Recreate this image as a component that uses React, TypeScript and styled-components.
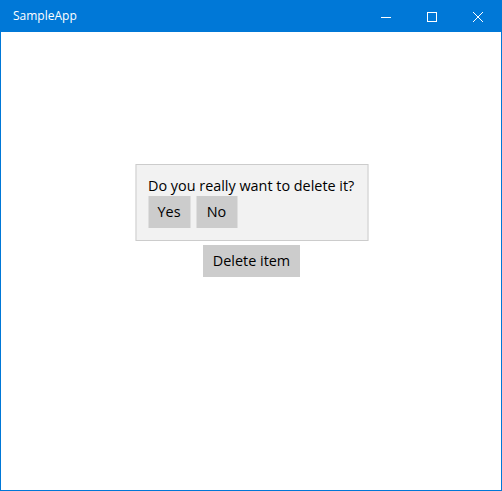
import React from 'react';
import styled, { createGlobalStyle } from 'styled-components';

const GlobalStyle = createGlobalStyle`
  html, body {
    margin: 0;
    padding: 0;
    background: #ffffff;
  }
  * {
    box-sizing: border-box;
  }
`;

const App = () => {
  return (
    <>
      <GlobalStyle />
      <StWindow>
        <StTitleBar>
          <StTitle>SampleApp</StTitle>
          <StCaptionButtons>
            <StCaptionButton aria-label="Minimize">
              <svg width="10" height="10" viewBox="0 0 10 10">
                <path d="M0 5.5h10" stroke="#fff" strokeWidth="1" />
              </svg>
            </StCaptionButton>
            <StCaptionButton aria-label="Maximize">
              <svg width="10" height="10" viewBox="0 0 10 10">
                <rect x="0.5" y="0.5" width="9" height="9" fill="none" stroke="#fff" strokeWidth="1" />
              </svg>
            </StCaptionButton>
            <StCaptionButton aria-label="Close">
              <svg width="10" height="10" viewBox="0 0 10 10">
                <path d="M0 0L10 10M10 0L0 10" stroke="#fff" strokeWidth="1" />
              </svg>
            </StCaptionButton>
          </StCaptionButtons>
        </StTitleBar>
        <StContent>
          <StAnchor>
            <StFlyout>
              <StQuestion>Do you really want to delete it?</StQuestion>
              <StButtonRow>
                <StButton $width={42}>Yes</StButton>
                <StButton $width={41}>No</StButton>
              </StButtonRow>
            </StFlyout>
            <StButton $width={97}>Delete item</StButton>
          </StAnchor>
        </StContent>
      </StWindow>
    </>
  );
};

export default App;

const StWindow = styled.div`
  display: flex;
  flex-direction: column;
  width: 502px;
  height: 491px;
  border: 1px solid #0078d7;
  background: #ffffff;
  font-family: 'Open Sans', 'Noto Sans', sans-serif;
`;

const StTitleBar = styled.div`
  display: flex;
  align-items: center;
  justify-content: space-between;
  height: 31px;
  flex-shrink: 0;
  background: #0078d7;
  color: #ffffff;
`;

const StTitle = styled.span`
  padding-left: 12px;
  font-size: 12px;
  padding-bottom: 2px;
`;

const StCaptionButtons = styled.div`
  display: flex;
  height: 100%;
`;

const StCaptionButton = styled.div`
  display: flex;
  align-items: center;
  justify-content: center;
  width: 46px;
  height: 100%;
`;

const StContent = styled.div`
  flex: 1;
  display: flex;
  align-items: center;
  justify-content: center;
  padding-left: 1px;
`;

const StAnchor = styled.div`
  position: relative;
  display: flex;
`;

const StFlyout = styled.div`
  position: absolute;
  left: 50%;
  bottom: calc(100% + 4px);
  transform: translateX(-50%);
  width: 233px;
  padding: 11px 12px 12px;
  background: #f2f2f2;
  border: 1px solid #cccccc;
`;

const StQuestion = styled.div`
  font-size: 14.4px;
  line-height: 20px;
  color: #000000;
  white-space: nowrap;
`;

const StButtonRow = styled.div`
  display: flex;
  gap: 6px;
`;

const StButton = styled.div<{ $width: number }>`
  display: flex;
  align-items: center;
  justify-content: center;
  width: ${({ $width }) => $width}px;
  height: 32px;
  padding-bottom: 1px;
  background: #cccccc;
  font-size: 14.4px;
  color: #000000;
  white-space: nowrap;
`;
